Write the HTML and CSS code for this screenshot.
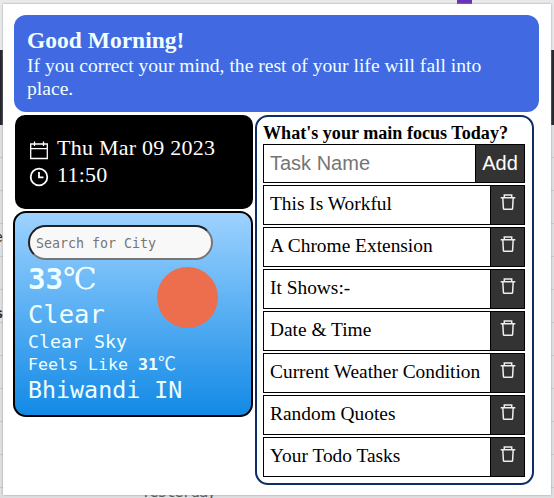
FILE: index.html
```html
<!DOCTYPE html>
<html lang="en">
<head>
<meta charset="utf-8">
<title>Daily Focus</title>
<link rel="stylesheet" href="styles.css">
</head>
<body>
<div class="backdrop">
  <div class="strip"><i class="badge"></i></div>
  <div class="band"></div>
  <div class="rows"></div>
  <span class="edge edge-a">e</span>
  <span class="edge edge-b">s</span>
  <span class="peek">Yesterday</span>
</div>
<main class="popup">
  <header class="quote">
    <h1>Good Morning!</h1>
    <p>If you correct your mind, the rest of your life will fall into<br>place.</p>
  </header>
  <div class="columns">
    <div class="left">
      <section class="clock">
        <div class="line">
          <svg viewBox="0 0 20 20" width="20" height="20" fill="none" stroke="#fff" stroke-width="1.3"><path d="M1.7 4h16.6v14.5H1.7zM1.7 8.7h16.6M5.5 1.5v4.5M14.5 1.5v4.5"/></svg>
          <span>Thu Mar 09 2023</span>
        </div>
        <div class="line">
          <svg viewBox="0 0 20 20" width="20" height="20" fill="none" stroke="#fff" stroke-width="1.8"><circle cx="10" cy="10" r="8.3"/><path d="M10 5v5.3h4.5"/></svg>
          <span>11:50</span>
        </div>
      </section>
      <section class="weather">
        <input type="text" placeholder="Search for City">
        <div class="report">
          <div class="temp"><b>33</b><span>℃</span></div>
          <div class="main">Clear</div>
          <div class="detail">Clear Sky</div>
          <div class="feels">Feels Like <b>31</b><span>℃</span></div>
          <div class="city">Bhiwandi IN</div>
          <i class="sun"></i>
        </div>
      </section>
    </div>
    <section class="todo">
      <h2>What's your main focus Today?</h2>
      <form class="entry"><input type="text" placeholder="Task Name"><button type="button">Add</button></form>
      <ul>
        <li><span>This Is Workful</span><button><svg viewBox="0 0 16 18"><use href="#trash"/></svg></button></li>
        <li><span>A Chrome Extension</span><button><svg viewBox="0 0 16 18"><use href="#trash"/></svg></button></li>
        <li><span>It Shows:-</span><button><svg viewBox="0 0 16 18"><use href="#trash"/></svg></button></li>
        <li><span>Date &amp; Time</span><button><svg viewBox="0 0 16 18"><use href="#trash"/></svg></button></li>
        <li><span>Current Weather Condition</span><button><svg viewBox="0 0 16 18"><use href="#trash"/></svg></button></li>
        <li><span>Random Quotes</span><button><svg viewBox="0 0 16 18"><use href="#trash"/></svg></button></li>
        <li><span>Your Todo Tasks</span><button><svg viewBox="0 0 16 18"><use href="#trash"/></svg></button></li>
      </ul>
    </section>
  </div>
</main>
<svg class="defs"><symbol id="trash" viewBox="0 0 16 18"><path d="M.7 4.7h14.6M4.3 4.7V1.9h7.4v2.8M2.8 4.7l.6 10.7q0 .8.8.8h7.6q.8 0 .8-.8l.6-10.7" fill="none" stroke="#eee" stroke-width="1.5"/></symbol></svg>
</body>
</html>
```

FILE: styles.css
```css
* { box-sizing: border-box; margin: 0; padding: 0; }
body { width: 554px; height: 498px; overflow: hidden; position: relative; background: #dcdce0; font-family: "Liberation Serif", serif; }
.defs { position: absolute; width: 0; height: 0; }

.backdrop { position: absolute; inset: 0; }
.strip { height: 50px; background: #e9e8ea; }
.badge { position: absolute; left: 457px; top: 0; width: 15px; height: 4px; background: #6a32b8; }
.band { height: 75px; background: #24262d; }
.rows { height: 373px; background: repeating-linear-gradient(#dedfe1 0 32px, #c6c8cb 32px 33px); }
.edge { position: absolute; left: -5px; font: 14px/18px "Liberation Sans", sans-serif; color: #222; }
.edge-a { top: 228px; }
.edge-b { top: 304px; font-weight: bold; }
.peek { position: absolute; left: 141px; top: 483px; font: 16px/18px "DejaVu Sans Mono", monospace; letter-spacing: -1.4px; color: #555; }

.popup { position: absolute; left: 3px; top: 4px; width: 548px; height: 491px; padding: 11px 0 0 10px; background: #fff; box-shadow: 0 0 2px #999; }
.quote { width: 525px; height: 97px; margin-left: 1px; padding: 12px 13px; border-radius: 12px; background: #4169e1; color: #f0ffff; }
.quote h1 { font-size: 23.5px; line-height: 27px; }
.quote p { font-size: 19.6px; line-height: 23px; white-space: nowrap; }

.columns { display: flex; align-items: flex-start; gap: 2px; margin-top: 3px; }
.left { width: 240px; }
.clock { height: 94px; margin: 0 0 2px 2px; padding: 19px 14px; border-radius: 10px; background: #000; color: #fff; font-size: 22px; letter-spacing: .24px; }
.line { display: flex; align-items: center; gap: 8px; height: 27px; }
.line svg { margin-top: 4px; }

.weather { height: 206px; padding: 12px 13px; border: 2px solid #000; border-radius: 13px; background: linear-gradient(#9dd2ff, #128ae6); color: #f0ffff; font-family: "DejaVu Sans Mono", monospace; white-space: nowrap; }
.weather input { display: block; width: 185px; height: 35px; padding: 2px 6px 0; border: 2px inset #767676; border-radius: 18px; background: #f8f8f8; font: 13.3px "DejaVu Sans Mono", monospace; }
.weather input::placeholder { color: #757575; }
.report { position: relative; }
.temp { height: 37px; font-size: 29.2px; line-height: 39px; }
.temp span { font: 30px "DejaVu Serif", serif; line-height: 30px; }
.main { height: 35px; font-size: 25.5px; line-height: 35px; }
.detail { height: 21px; font-size: 18.3px; line-height: 20px; }
.feels { height: 21px; font-size: 16.6px; line-height: 20px; }
.feels span { font: 18px "Noto Sans CJK SC", sans-serif; line-height: 18px; }
.city { height: 30px; font-size: 23.3px; line-height: 31px; }
.sun { position: absolute; left: 129px; top: 7px; width: 61px; height: 61px; border-radius: 50%; background: #ec6e4c; }

.todo { width: 279px; height: 370px; padding: 6px 7px 0 6px; border: 2px solid #0c2d68; border-radius: 13px; }
.todo h2 { height: 21px; font-size: 18.1px; line-height: 21px; white-space: nowrap; }
.entry { display: flex; width: 262px; height: 39px; margin-bottom: 2px; border: 1px solid #000; }
.entry input { width: 211px; padding: 0 6px; border: 0; font: 20px "Liberation Sans", sans-serif; }
.entry input::placeholder { color: #757575; }
.entry button { flex: 1; border: 0; border-left: 1px solid #000; background: #333; color: #fff; font: 20px "Liberation Sans", sans-serif; }
.todo ul { display: grid; gap: 2px; list-style: none; }
.todo li { display: flex; width: 262px; height: 40px; border: 1px solid #000; }
.todo li span { width: 226px; padding-left: 6px; font-size: 19.4px; line-height: 35px; white-space: nowrap; }
.todo li button { flex: 1; border: 0; border-left: 1px solid #000; background: #333; padding-bottom: 4px; }
.todo li svg { width: 16px; height: 18px; }
```
